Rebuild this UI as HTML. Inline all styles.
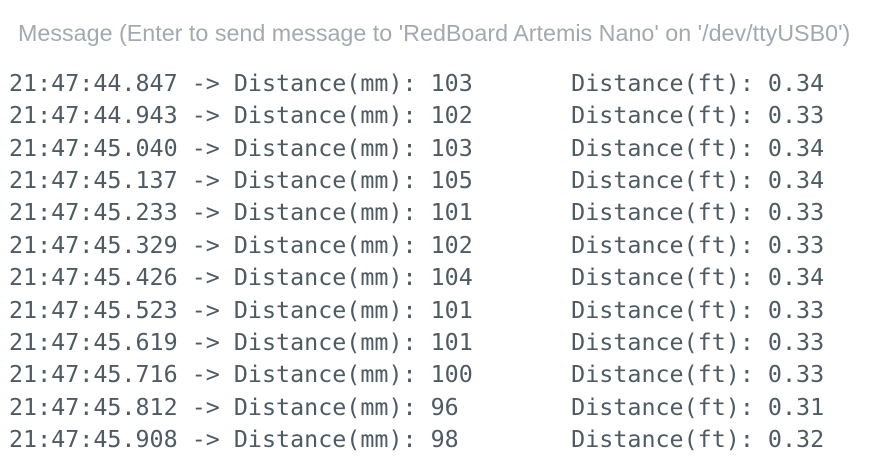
<!DOCTYPE html>
<html><head><meta charset="utf-8"><style>
html,body{margin:0;padding:0;width:875px;height:469px;overflow:hidden;background:#fff}
.ph{position:absolute;left:18px;top:20px;font:23.3px "Liberation Sans",sans-serif;color:#a2aab0;white-space:nowrap}
.clip{position:absolute;left:0;top:72px;width:875px;height:397px;overflow:hidden}
.out{position:absolute;left:9px;top:-5px;font:23.35px "DejaVu Sans Mono","Liberation Mono",monospace;color:#4e5b62;line-height:32.36px;white-space:pre;tab-size:8;margin:0}
</style></head><body>
<div class="ph">Message (Enter to send message to 'RedBoard Artemis Nano' on '/dev/ttyUSB0')</div>
<div class="clip"><pre class="out">21:47:44.847 -> Distance(mm): 103	Distance(ft): 0.34
21:47:44.943 -> Distance(mm): 102	Distance(ft): 0.33
21:47:45.040 -> Distance(mm): 103	Distance(ft): 0.34
21:47:45.137 -> Distance(mm): 105	Distance(ft): 0.34
21:47:45.233 -> Distance(mm): 101	Distance(ft): 0.33
21:47:45.329 -> Distance(mm): 102	Distance(ft): 0.33
21:47:45.426 -> Distance(mm): 104	Distance(ft): 0.34
21:47:45.523 -> Distance(mm): 101	Distance(ft): 0.33
21:47:45.619 -> Distance(mm): 101	Distance(ft): 0.33
21:47:45.716 -> Distance(mm): 100	Distance(ft): 0.33
21:47:45.812 -> Distance(mm): 96	Distance(ft): 0.31
21:47:45.908 -> Distance(mm): 98	Distance(ft): 0.32</pre></div>
</body></html>
